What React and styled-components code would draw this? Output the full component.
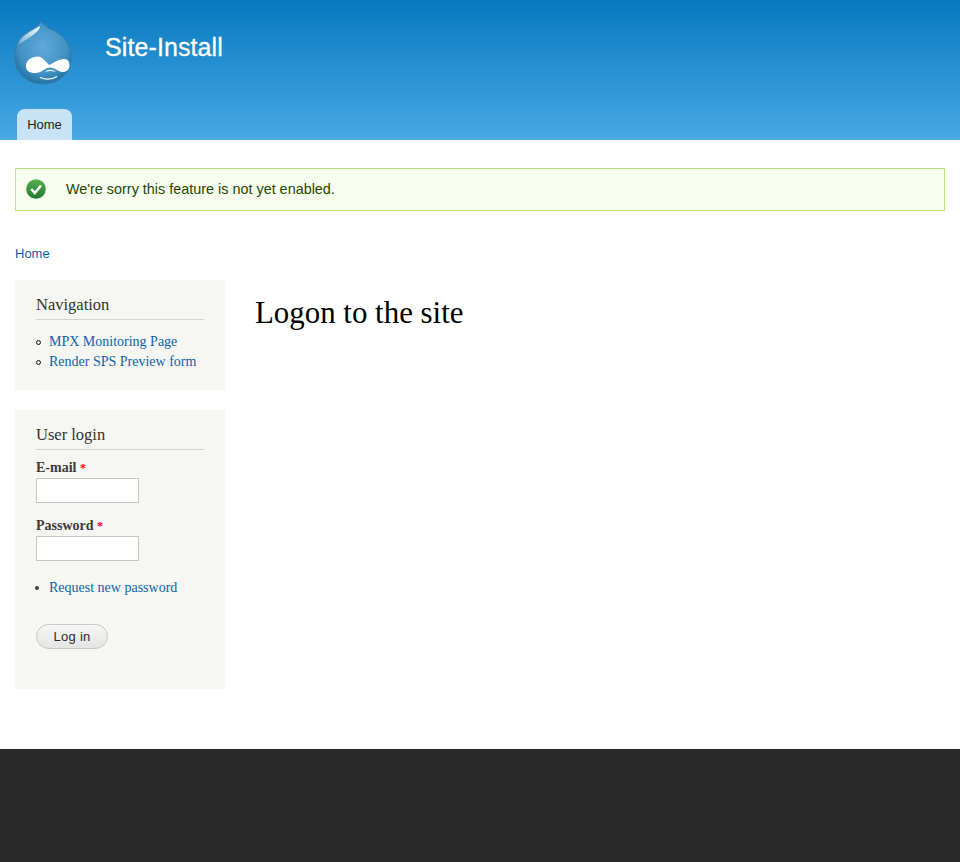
import React from 'react';
import styled, { createGlobalStyle } from 'styled-components';

const GlobalStyle = createGlobalStyle`
  html, body {
    margin: 0;
    padding: 0;
    background: #fff;
    font-family: "Liberation Sans", Arial, sans-serif;
  }
`;

const serif = `"Liberation Serif", "Times New Roman", serif`;

const Header = styled.header`
  height: 140px;
  box-sizing: border-box;
  padding: 20px 0 0 14px;
  background: linear-gradient(#0779bf, #48a9e4);
  display: flex;
  flex-direction: column;
`;

const Branding = styled.div`
  display: flex;
  align-items: flex-start;
  height: 89px;
`;

const SiteName = styled.h1`
  margin: 12px 0 0 33px;
  font-size: 25px;
  line-height: 30px;
  font-weight: normal;
  letter-spacing: 0.1px;
  color: #fff;
  -webkit-text-stroke: 0.3px #fff;
`;

const Tab = styled.a`
  display: block;
  width: 55px;
  height: 31px;
  margin-left: 3px;
  box-sizing: border-box;
  border-radius: 8px 8px 0 0;
  background: #c9e3f6;
  color: #222;
  font-size: 13px;
  line-height: 31px;
  text-align: center;
`;

const Content = styled.div`
  padding: 28px 15px 0;
  height: 609px;
  box-sizing: border-box;
`;

const Message = styled.div`
  height: 43px;
  box-sizing: border-box;
  display: flex;
  align-items: center;
  gap: 20px;
  padding: 0 0 2px 10px;
  border: 1px solid #b9e57f;
  background: #f8fff0;
  color: #234600;
  font-size: 14.4px;
`;

const Breadcrumb = styled.a`
  display: block;
  margin-top: 34px;
  color: #0e5fa8;
  font-size: 13px;
  line-height: 17px;
`;

const Columns = styled.div`
  display: flex;
  margin-top: 18px;
  gap: 30px;
`;

const Sidebar = styled.aside`
  width: 210px;
  display: flex;
  flex-direction: column;
  gap: 20px;
`;

const Block = styled.section`
  background: #f6f6f2;
  padding: 15px 21px 0;
  height: ${(p) => p.$height}px;
  box-sizing: border-box;
  font-family: ${serif};
`;

const BlockTitle = styled.h2`
  margin: 0;
  height: 24px;
  font-size: 16.5px;
  line-height: 20px;
  font-weight: normal;
  color: #333;
  border-bottom: 1px solid #d4d4d4;
`;

const LinkList = styled.ul`
  margin: ${(p) => p.$top}px 0 0;
  padding: 0;
  list-style: none;
  font-size: 14px;
  line-height: 20px;
`;

const ListItem = styled.li`
  display: flex;
  align-items: center;
  gap: ${(p) => (p.$ring ? 8 : 10)}px;

  &::before {
    content: '';
    flex: none;
    box-sizing: border-box;
    border-radius: 50%;
    margin-left: ${(p) => (p.$ring ? 0 : -1)}px;
    width: ${(p) => (p.$ring ? 5 : 4)}px;
    height: ${(p) => (p.$ring ? 5 : 4)}px;
    border: ${(p) => (p.$ring ? '1.5px solid #111' : 'none')};
    background: ${(p) => (p.$ring ? 'transparent' : '#444')};
  }
`;

const ListLink = styled.a`
  color: #0b64ab;
`;

const Label = styled.label`
  display: block;
  height: 17px;
  margin-top: ${(p) => p.$top}px;
  font-size: 14px;
  line-height: 17px;
  font-weight: bold;
  color: #3b3b3b;
`;

const Required = styled.span`
  color: #f00;
  font-size: 12px;
`;

const Input = styled.input`
  display: block;
  width: 103px;
  height: 25px;
  margin-top: 2px;
  box-sizing: border-box;
  border: 1px solid #c6c6c6;
  background: #fff;
  padding: 0;
`;

const SubmitButton = styled.button`
  display: block;
  width: 72px;
  height: 25px;
  margin-top: 26px;
  padding: 0;
  border: 1px solid #c9c9c9;
  border-radius: 13px;
  background: linear-gradient(#f7f7f7, #e4e4e4);
  color: #2a2a2a;
  font-family: "Liberation Sans", Arial, sans-serif;
  font-size: 13px;
  letter-spacing: 0.3px;
`;

const Main = styled.main`
  flex: 1;
`;

const PageTitle = styled.h1`
  margin: 14px 0 0;
  font-family: ${serif};
  font-size: 30.9px;
  line-height: 37px;
  font-weight: normal;
  color: #000;
`;

const Footer = styled.footer`
  height: 113px;
  background: #292929;
`;

const DropLogo = () => (
  <svg width="58" height="65" viewBox="0 0 58 65">
    <defs>
      <radialGradient id="drop" cx="0.5" cy="0.42" r="0.6">
        <stop offset="0" stopColor="#5eaad9" />
        <stop offset="0.7" stopColor="#4291c4" />
        <stop offset="1" stopColor="#1f6f9f" />
      </radialGradient>
      <linearGradient id="shine" x1="1" y1="0" x2="0" y2="1">
        <stop offset="0" stopColor="#fff" stopOpacity="1" />
        <stop offset="1" stopColor="#fff" stopOpacity="0.2" />
      </linearGradient>
    </defs>
    <path
      d="M27.5 0 C28 5 34 8 42 12 C51 17 57.5 26 57.5 36.5 C57.5 53 45 64 28.8 64 C12 64 0.5 52 0.5 36.5 C0.5 26 5 18 12 13 C19 8 27 6 27.5 0Z"
      fill="url(#drop)"
      stroke="#3a7ba3"
      strokeWidth="0.8"
    />
    <path d="M4 25 C6 16 16 12 26 6 C26 12 14 18 4 25Z" fill="url(#shine)" />
    <path
      d="M12 46 C12 40 18 36.5 24 36.5 C29 36.5 32 43 35.5 45 C39 43 45 39 50 39 C54 39 56 42 55.5 46 C55 50 52 52 48.5 52 C44 52 41 47.5 36 47.5 C31 47.5 28 53 21 53 C15.5 53 12 51 12 46Z"
      fill="#fff"
    />
    <path d="M31 52 C33.5 49 38.5 49 42 52 C38 50.5 34.5 50.5 31 52Z" fill="#fff" />
    <path d="M26 57.5 C32 60 38 59.5 43 56.5" fill="none" stroke="#fff" strokeWidth="1.3" />
  </svg>
);

const CheckIcon = () => (
  <svg width="20" height="20" viewBox="0 0 20 20">
    <defs>
      <linearGradient id="ok" x1="0" y1="0" x2="0" y2="1">
        <stop offset="0" stopColor="#58b050" />
        <stop offset="1" stopColor="#1f7a2c" />
      </linearGradient>
    </defs>
    <circle cx="10" cy="10" r="9.8" fill="url(#ok)" />
    <path d="M5.2 10 L8.8 14 L15 6.5" fill="none" stroke="#fff" strokeWidth="2.6" />
  </svg>
);

export default function App() {
  return (
    <>
      <GlobalStyle />
      <Header>
        <Branding>
          <DropLogo />
          <SiteName>Site-Install</SiteName>
        </Branding>
        <Tab>Home</Tab>
      </Header>
      <Content>
        <Message>
          <CheckIcon />
          We're sorry this feature is not yet enabled.
        </Message>
        <Breadcrumb>Home</Breadcrumb>
        <Columns>
          <Sidebar>
            <Block $height={110}>
              <BlockTitle>Navigation</BlockTitle>
              <LinkList $top={12}>
                <ListItem $ring><ListLink>MPX Monitoring Page</ListLink></ListItem>
                <ListItem $ring><ListLink>Render SPS Preview form</ListLink></ListItem>
              </LinkList>
            </Block>
            <Block $height={279}>
              <BlockTitle>User login</BlockTitle>
              <Label $top={9}>E-mail <Required>*</Required></Label>
              <Input type="text" />
              <Label $top={14}>Password <Required>*</Required></Label>
              <Input type="password" />
              <LinkList $top={17}>
                <ListItem><ListLink>Request new password</ListLink></ListItem>
              </LinkList>
              <SubmitButton>Log in</SubmitButton>
            </Block>
          </Sidebar>
          <Main>
            <PageTitle>Logon to the site</PageTitle>
          </Main>
        </Columns>
      </Content>
      <Footer />
    </>
  );
}
